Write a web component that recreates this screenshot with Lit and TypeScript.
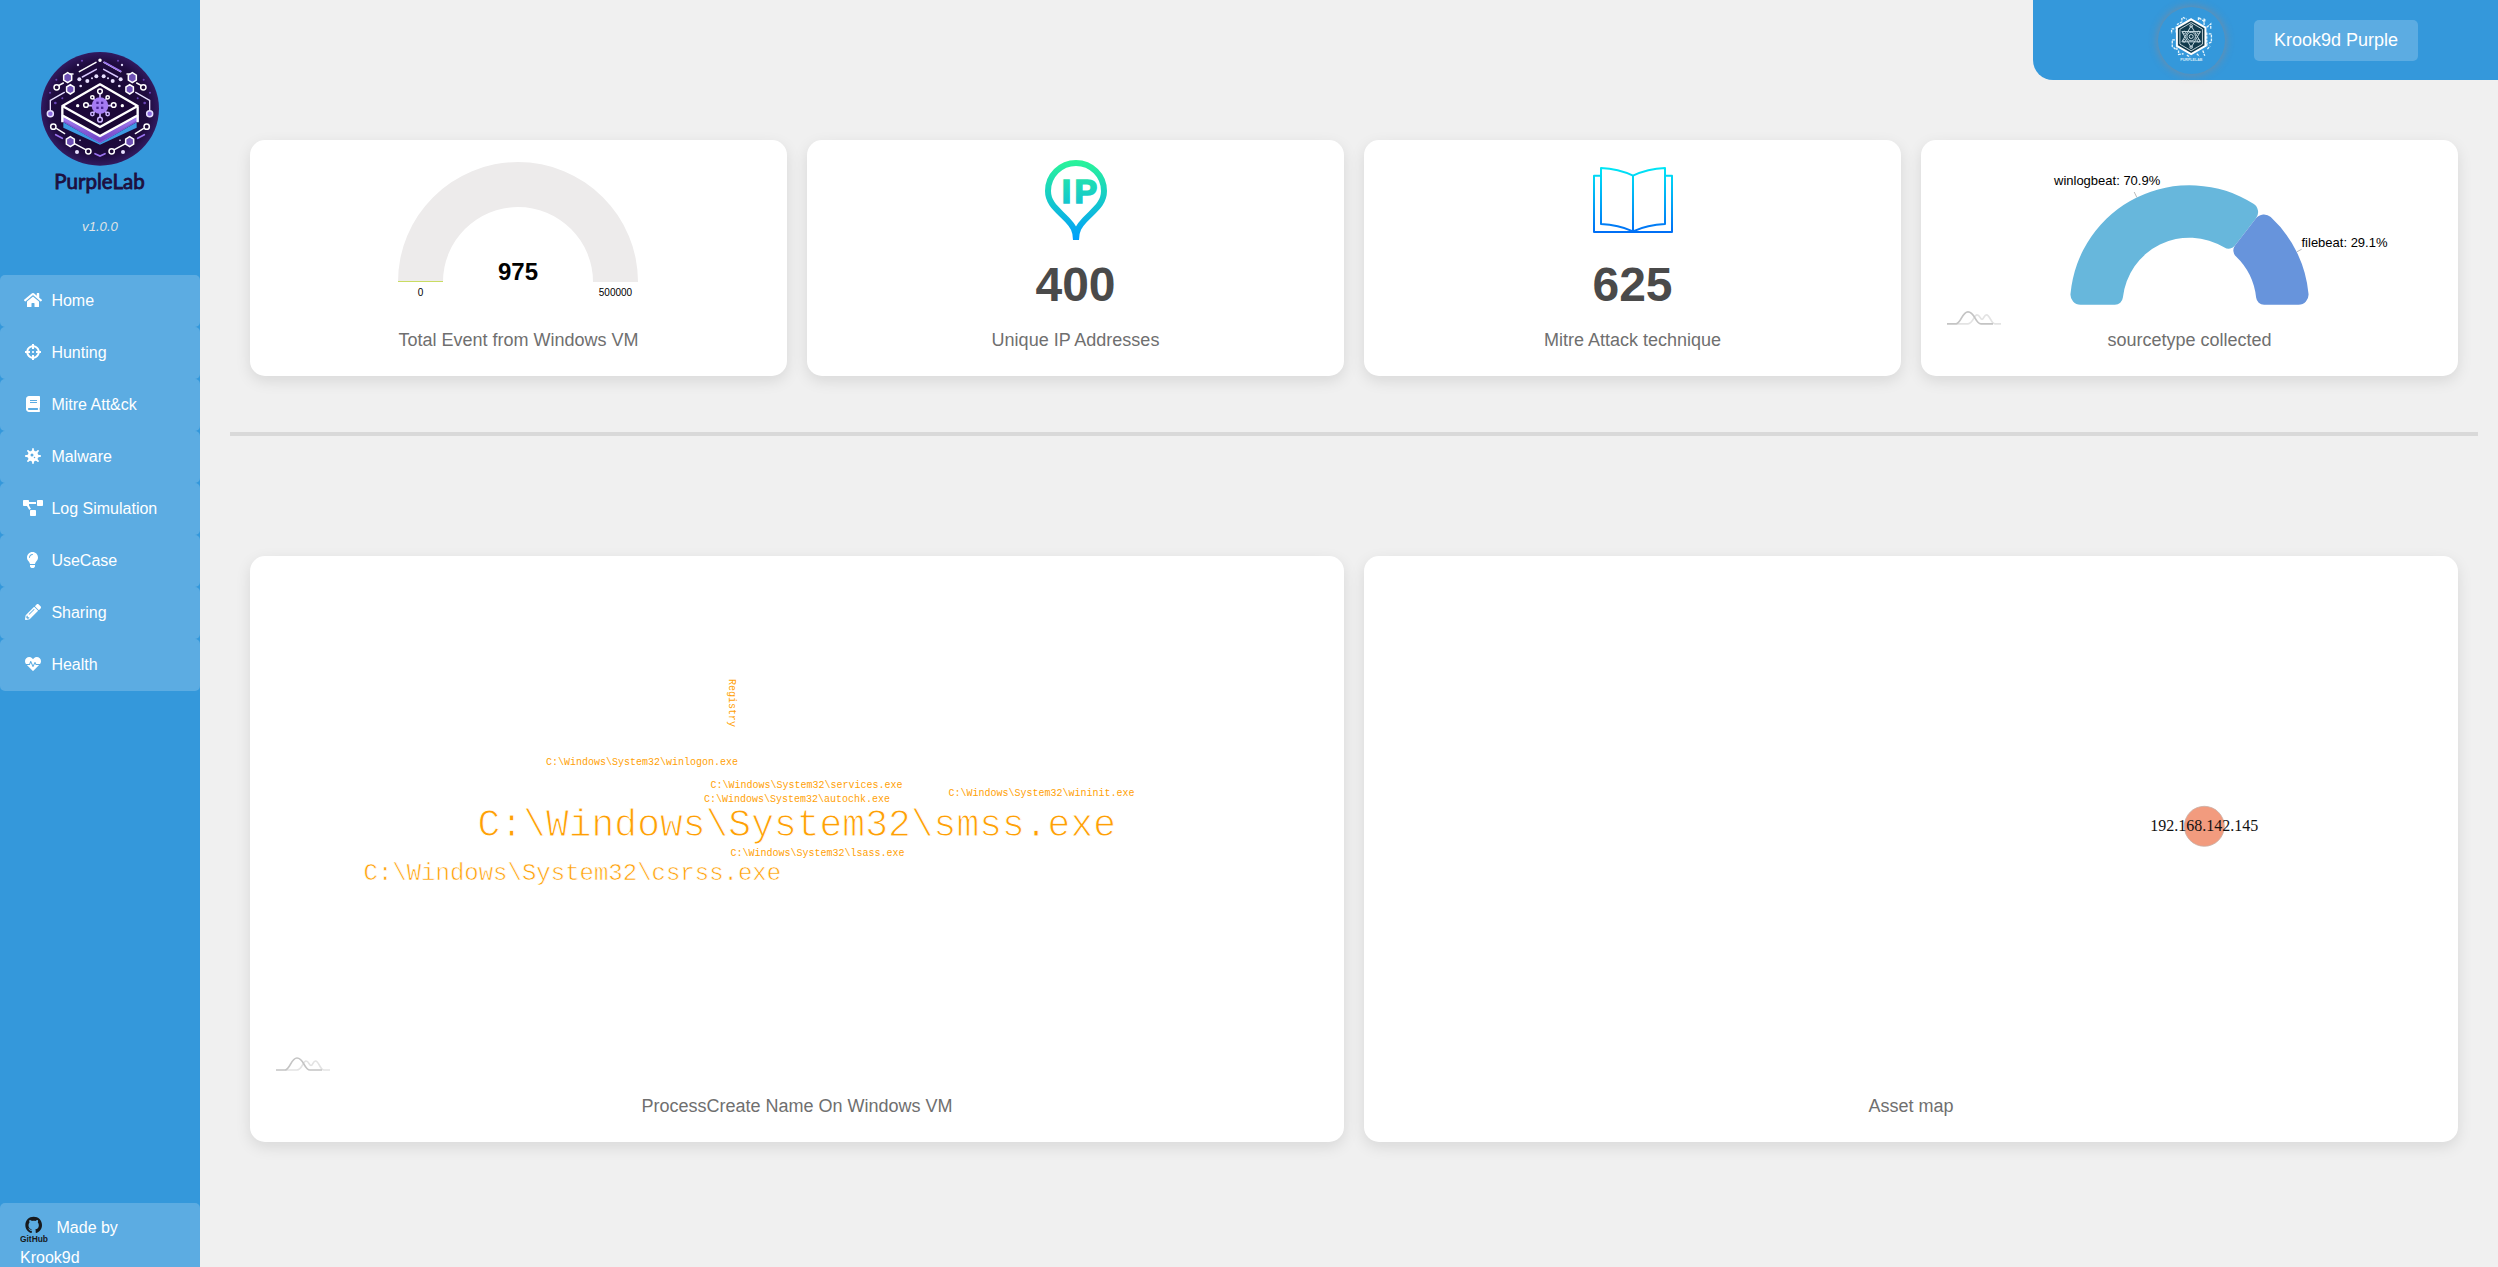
import { LitElement, html, css, svg } from "lit";
import { customElement, property } from "lit/decorators.js";

interface NavItem {
  label: string;
  width: number;
  path: string;
}

const NAV: NavItem[] = [
  {
    label: "Home",
    width: 576,
    path: "M280.37 148.26L96 300.11V464a16 16 0 0 0 16 16l112.06-.29a16 16 0 0 0 15.92-16V368a16 16 0 0 1 16-16h64a16 16 0 0 1 16 16v95.64a16 16 0 0 0 16 16.05L464 480a16 16 0 0 0 16-16V300L295.67 148.26a12.19 12.19 0 0 0-15.3 0zM571.6 251.47L488 182.56V44.05a12 12 0 0 0-12-12h-56a12 12 0 0 0-12 12v72.61L318.47 43a48 48 0 0 0-61 0L4.34 251.47a12 12 0 0 0-1.6 16.9l25.5 31A12 12 0 0 0 45.15 301l235.22-193.74a12.19 12.19 0 0 1 15.3 0L530.9 301a12 12 0 0 0 16.9-1.6l25.5-31a12 12 0 0 0-1.7-16.93z",
  },
  {
    label: "Hunting",
    width: 512,
    path: "M500 224h-30.364C455.724 130.325 381.675 56.276 288 42.364V12c0-6.627-5.373-12-12-12h-40c-6.627 0-12 5.373-12 12v30.364C130.325 56.276 56.276 130.325 42.364 224H12c-6.627 0-12 5.373-12 12v40c0 6.627 5.373 12 12 12h30.364C56.276 381.675 130.325 455.724 224 469.636V500c0 6.627 5.373 12 12 12h40c6.627 0 12-5.373 12-12v-30.364C381.675 455.724 455.724 381.675 469.636 288H500c6.627 0 12-5.373 12-12v-40c0-6.627-5.373-12-12-12zM288 404.634V364c0-6.627-5.373-12-12-12h-40c-6.627 0-12 5.373-12 12v40.634C165.826 392.232 119.783 346.243 107.366 288H148c6.627 0 12-5.373 12-12v-40c0-6.627-5.373-12-12-12h-40.634C119.768 165.826 165.757 119.783 224 107.366V148c0 6.627 5.373 12 12 12h40c6.627 0 12-5.373 12-12v-40.634C346.174 119.768 392.217 165.757 404.634 224H364c-6.627 0-12 5.373-12 12v40c0 6.627 5.373 12 12 12h40.634C392.232 346.174 346.243 392.217 288 404.634zM288 256c0 17.673-14.327 32-32 32s-32-14.327-32-32c0-17.673 14.327-32 32-32s32 14.327 32 32z",
  },
  {
    label: "Mitre Att&ck",
    width: 448,
    path: "M448 360V24c0-13.3-10.7-24-24-24H96C43 0 0 43 0 96v320c0 53 43 96 96 96h328c13.3 0 24-10.7 24-24v-16c0-7.5-3.5-14.3-8.9-18.7-4.2-15.4-4.2-59.3 0-74.7 5.4-4.3 8.9-11.1 8.9-18.6zM128 134c0-3.3 2.7-6 6-6h212c3.3 0 6 2.7 6 6v20c0 3.3-2.7 6-6 6H134c-3.3 0-6-2.7-6-6v-20zm0 64c0-3.3 2.7-6 6-6h212c3.3 0 6 2.7 6 6v20c0 3.3-2.7 6-6 6H134c-3.3 0-6-2.7-6-6v-20zm253.4 250H96c-17.7 0-32-14.3-32-32 0-17.6 14.4-32 32-32h285.4c-1.9 17.1-1.9 46.9 0 64z",
  },
  {
    label: "Malware",
    width: 512,
    path: "M483.55,227.55H462c-50.68,0-76.07-61.27-40.23-97.11L437,115.19A28.44,28.44,0,0,0,396.8,75L381.56,90.22c-35.84,35.83-97.11,10.45-97.11-40.23V28.44a28.45,28.45,0,0,0-56.9,0V50c0,50.68-61.27,76.06-97.11,40.23L115.2,75A28.44,28.44,0,0,0,75,115.19l15.25,15.25c35.84,35.84,10.45,97.11-40.23,97.11H28.45a28.45,28.45,0,1,0,0,56.89H50c50.68,0,76.07,61.28,40.23,97.12L75,396.8A28.45,28.45,0,0,0,115.2,437l15.24-15.25c35.84-35.84,97.11-10.45,97.11,40.23v21.54a28.45,28.45,0,0,0,56.9,0V462c0-50.68,61.27-76.07,97.11-40.23L396.8,437A28.45,28.45,0,0,0,437,396.8l-15.25-15.24c-35.84-35.84-10.45-97.12,40.23-97.12h21.54a28.45,28.45,0,1,0,0-56.89ZM224,272a48,48,0,1,1,48-48A48,48,0,0,1,224,272Zm80,56a24,24,0,1,1,24-24A24,24,0,0,1,304,328Z",
  },
  {
    label: "Log Simulation",
    width: 640,
    path: "M384 320H256c-17.67 0-32 14.33-32 32v128c0 17.67 14.33 32 32 32h128c17.67 0 32-14.33 32-32V352c0-17.67-14.33-32-32-32zM192 32c0-17.67-14.33-32-32-32H32C14.33 0 0 14.33 0 32v128c0 17.67 14.33 32 32 32h95.72l73.16 128.04C211.98 300.98 232.4 288 256 288h.28L192 175.51V128h224V64H192V32zM608 0H480c-17.67 0-32 14.33-32 32v128c0 17.67 14.33 32 32 32h128c17.67 0 32-14.33 32-32V32c0-17.67-14.33-32-32-32z",
  },
  {
    label: "UseCase",
    width: 352,
    path: "M96.06 454.35c.01 6.29 1.87 12.45 5.36 17.69l17.09 25.69a31.99 31.99 0 0 0 26.64 14.28h61.71a31.99 31.99 0 0 0 26.64-14.28l17.09-25.69a31.989 31.989 0 0 0 5.36-17.69l.04-38.35H96.01l.05 38.35zM0 176c0 44.37 16.45 84.85 43.56 115.78 16.52 18.85 42.36 58.23 52.21 91.45.04.26.07.52.11.78h160.24c.04-.26.07-.51.11-.78 9.85-33.22 35.69-72.6 52.21-91.45C335.55 260.85 352 220.37 352 176 352 78.61 272.91-.3 175.45 0 73.44.31 0 82.97 0 176zm176-80c-44.11 0-80 35.89-80 80 0 8.84-7.16 16-16 16s-16-7.16-16-16c0-61.76 50.24-112 112-112 8.84 0 16 7.16 16 16s-7.16 16-16 16z",
  },
  {
    label: "Sharing",
    width: 512,
    path: "M497.9 142.1l-46.1 46.1c-4.7 4.7-12.3 4.7-17 0l-111-111c-4.7-4.7-4.7-12.3 0-17l46.1-46.1c18.7-18.7 49.1-18.7 67.9 0l60.1 60.1c18.8 18.7 18.8 49.1 0 67.9zM284.2 99.8L21.6 362.4.4 483.9c-2.9 16.4 11.4 30.6 27.8 27.8l121.5-21.3 262.6-262.6c4.7-4.7 4.7-12.3 0-17l-111-111c-4.8-4.7-12.4-4.7-17.1 0zM124.1 339.9c-5.5-5.5-5.5-14.3 0-19.8l154-154c5.5-5.5 14.3-5.5 19.8 0s5.5 14.3 0 19.8l-154 154c-5.5 5.5-14.3 5.5-19.8 0zM88 424h48v36.3l-64.5 11.3-31.1-31.1L51.7 376H88v48z",
  },
  {
    label: "Health",
    width: 512,
    path: "M320.2 243.8l-49.7 99.4c-6 12.1-23.4 11.7-28.9-.6l-56.9-126.3-30 71.7H60.6l182.5 186.5c7.1 7.3 18.6 7.3 25.7 0L451.4 288H342.3l-22.1-44.2zM473.7 73.9l-2.4-2.5c-51.5-52.6-135.8-52.6-187.4 0L256 100l-27.9-28.5c-51.5-52.7-135.9-52.7-187.4 0l-2.4 2.4C-10.4 123.7-12.5 203 31 256h102.4l35.9-86.2c5.4-12.9 23.6-13.1 29.3-.4l58.2 129.3 49-97.9c5.9-11.8 22.7-11.8 28.6 0l27.6 55.2H481c43.5-53 41.4-132.3-7.3-182.1z",
  },
];

/** Ring segment with rounded corners; angles in degrees, counter-clockwise from the right. */
function slicePath(cx: number, cy: number, R: number, r: number, from: number, to: number, co: number, ci: number): string {
  const rad = Math.PI / 180;
  const a = from * rad;
  const b = to * rad;
  const p = (d: number, t: number) => `${(cx + d * Math.cos(t)).toFixed(2)} ${(cy - d * Math.sin(t)).toFixed(2)}`;
  const oo = Math.asin(co / (R - co));
  const io = Math.asin(ci / (r + ci));
  const eo = Math.sqrt((R - co) ** 2 - co ** 2);
  const ei = Math.sqrt((r + ci) ** 2 - ci ** 2);
  return [
    `M${p(ei, a)}`,
    `L${p(eo, a)}`,
    `A${co} ${co} 0 0 1 ${p(R, a - oo)}`,
    `A${R} ${R} 0 0 1 ${p(R, b + oo)}`,
    `A${co} ${co} 0 0 1 ${p(eo, b)}`,
    `L${p(ei, b)}`,
    `A${ci} ${ci} 0 0 1 ${p(r, b + io)}`,
    `A${r} ${r} 0 0 0 ${p(r, a - io)}`,
    `A${ci} ${ci} 0 0 1 ${p(ei, a)}`,
    "Z",
  ].join("");
}

/** Small chart-library mark, drawn with its left end of the baseline at (x, y). */
const chartMark = (x: number, y: number) => svg`
  <g transform="translate(${x} ${y})" fill="none" stroke-width="1.7">
    <path stroke="#e3e3e3" d="M9 0H21C26 0 27 -9 30 -9C33 -9 33 -4.5 35 -4.5C37 -4.5 37 -9 39.500 -9C43 -9 44 0 48 0H54"/>
    <path stroke="#c4c4c4" d="M0 0H9C14 0 15 -12 21 -12C28 -12 28 0 34 0H46"/>
  </g>`;

const poly = (cx: number, cy: number, s: number) =>
  `M${cx} ${cy - s}L${cx + s * 0.8} ${cy - s * 0.5}V${cy + s * 0.5}L${cx} ${cy + s}L${cx - s * 0.8} ${cy + s * 0.5}V${cy - s * 0.5}Z`;

@customElement("lab-logo")
class LabLogo extends LitElement {
  static styles = css`
    :host { display: block; width: 120px; height: 147px; }
    svg { display: block; width: 120px; height: 147px; }
    .name { font: 400 62px Lato, "Open Sans", sans-serif; fill: #1d0f40; stroke: #1d0f40; stroke-width: 2.5px; }
  `;

  render() {
    const half = () => svg`
      <path d="M238 215L288 187" stroke="#fff"/>
      <path d="M247 231L289 208" stroke="#d9c8ff"/>
      <path d="M177 256L190 249M219 222H211" stroke="#fff"/>
      <path d="M151 331V301L193 277" stroke="#e6dfff" stroke-width="4"/>
      <path d="M170 386L194 401" stroke="#fff" stroke-width="4"/>
      <path d="M167 404L187 415" stroke="#9a72ee" stroke-width="5"/>
      <path d="M222 430L257 449" stroke="#fff"/>
      <path d="${poly(203, 233, 15)}" fill="#6f50b5" stroke="#fff"/>
      <path d="${poly(211, 268, 14)}" fill="#6f50b5" stroke="#fff"/>
      <path d="${poly(211, 425, 15)}" fill="#6f50b5" stroke="#fff"/>
      <circle cx="170" cy="262" r="8" fill="#1d0a38" stroke="#fff"/>
      <circle cx="151" cy="341" r="9" fill="#8d6be0" stroke="#e6dfff"/>
      <circle cx="160" cy="380" r="8" fill="#1d0a38" stroke="#fff"/>
      <circle cx="265" cy="454" r="8" fill="#1d0a38" stroke="#fff"/>
      <g fill="#e8e0ff" stroke="none">
        <circle cx="238" cy="238" r="6"/><circle cx="262" cy="243" r="6"/><circle cx="289" cy="229" r="6"/>
        <circle cx="276" cy="235" r="3"/><circle cx="242" cy="258" r="4"/><circle cx="231" cy="456" r="6"/>
        <circle cx="234" cy="195" r="3.500"/>
        <circle cx="240" cy="421" r="2.500"/>
      </g>
      <g fill="#6a45b8" stroke="none">
        <circle cx="169" cy="239" r="3"/><circle cx="150" cy="278" r="3"/><circle cx="246" cy="182" r="3"/>
        <circle cx="166" cy="309" r="4"/><circle cx="187" cy="295" r="3"/>
      </g>`;
    return html`<svg viewBox="120 150 360 441">
      <defs>
        <radialGradient id="disc" cx="50%" cy="50%" r="55%">
          <stop offset="0" stop-color="#12062a"/><stop offset=".75" stop-color="#1f0b3f"/><stop offset="1" stop-color="#3b2272"/>
        </radialGradient>
        <linearGradient id="side" x1="0" y1="0" x2="0" y2="1">
          <stop offset="0" stop-color="#a883f5"/><stop offset="1" stop-color="#6a3ec0"/>
        </linearGradient>
      </defs>
      <ellipse cx="300" cy="326.500" rx="177" ry="170.500" fill="url(#disc)"/>
      <g fill="none" stroke-width="4.500" stroke-linecap="round">
        ${half()}
        <g transform="translate(600 0) scale(-1 1)">${half()}</g>
        <path d="M313 187L362 214M285 461L300 468L315 461" stroke="#9a72ee" stroke-width="5"/>
        <circle cx="300" cy="181" r="3" fill="#fff" stroke="#fff"/>
      </g>
      <path d="M186 362L300 428L414 362V348L300 412L186 348Z" fill="url(#side)" stroke="#8058d6" stroke-width="4"/>
      <path d="M190 367L300 430L410 367V383L300 434L190 383Z" fill="#3d9ae4"/>
      <path d="M300 252L414 318V346L300 408L186 346V318Z" fill="#1a0735"/>
      <g fill="none" stroke="#fff" stroke-width="7" stroke-linejoin="round">
        <path d="M300 253L413 318L300 381L187 318Z" fill="#1c0838"/>
        <path d="M187 320V367M413 320V367M189 347L300 408L411 347"/>
      </g>
      <circle cx="233" cy="317" r="5" fill="#fff"/><circle cx="367" cy="317" r="5" fill="#fff"/>
      <g fill="none" stroke="#cdb6ff" stroke-width="5">
        <path d="M300 282V352M266 317H334M281 296L319 338M319 296L281 338"/>
        <g fill="#1c0838" stroke-width="4.500">
          <circle cx="300" cy="274" r="7" stroke="#fff"/><circle cx="300" cy="359" r="7"/>
          <circle cx="258" cy="315" r="7" stroke="#fff"/><circle cx="341" cy="315" r="7" stroke="#fff"/>
          <circle cx="277" cy="292" r="5" stroke="#fff"/><circle cx="323" cy="292" r="5" stroke="#fff"/>
          <circle cx="277" cy="342" r="5"/><circle cx="323" cy="342" r="5"/>
        </g>
      </g>
      <circle cx="300" cy="317" r="25" fill="#a57cf3"/>
      <g fill="#4a2596">
        <rect x="289" y="305" width="7" height="7"/><rect x="303" y="305" width="7" height="7"/>
        <rect x="289" y="320" width="7" height="7"/><rect x="303" y="320" width="7" height="7"/>
      </g>
      <text class="name" x="163" y="567" textLength="271" lengthAdjust="spacingAndGlyphs">PurpleLab</text>
    </svg>`;
  }
}

@customElement("lab-sidebar")
class LabSidebar extends LitElement {
  static styles = css`
    :host {
      display: flex; flex-direction: column; width: 200px; height: 1267px; box-sizing: border-box;
      padding-top: 50px; overflow: hidden; background: #3498db; color: #fff;
      font-family: "Liberation Sans", Arial, sans-serif; font-size: 16px;
    }
    .logo { align-self: center; }
    .version { margin-top: 22px; height: 56px; line-height: 16px; text-align: center; font-size: 13.2px; font-style: italic; color: #dfe3e6; }
    .item { display: flex; align-items: center; height: 52px; box-sizing: border-box; padding-left: 20px; border-radius: 5px; background: rgba(255, 255, 255, 0.2); }
    .icon { display: flex; justify-content: center; width: 25px; margin: 0 6.4px 2px 0; }
    .icon svg { height: 16px; fill: #fff; display: block; }
    .text { padding-bottom: 1px; }
    .credit { margin-top: auto; flex: none; height: 64px; box-sizing: border-box; padding: 14px 20px 0; border-radius: 5px 5px 0 0; background: rgba(255, 255, 255, 0.2); }
    .row { display: flex; align-items: flex-start; height: 32px; line-height: 22px; }
    .row svg { width: 28px; height: 27px; margin: -1px 8.5px 0 0; }
    .hub { font: 700 27px "Liberation Sans", Arial, sans-serif; fill: #17191c; }
    .second { display: block; line-height: 18px; }
  `;

  render() {
    return html`
      <lab-logo class="logo"></lab-logo>
      <div class="version">v1.0.0</div>
      <nav>
        ${NAV.map(
          (n) => html`<div class="item">
            <span class="icon"><svg width=${n.width / 32} height="16" viewBox="0 0 ${n.width} 512"><path d=${n.path} /></svg></span>
            <span class="text">${n.label}</span>
          </div>`
        )}
      </nav>
      <div class="credit">
        <div class="row">
          <svg viewBox="60 108 84 81">
            <path fill="#17191c" fill-rule="evenodd" d="M101 110.500C87 110.500 76 121 76 135C76 147 83 155.500 93 159C95 159.500 95.500 158 95.500 156.500V152.500C90 153.500 88 150.500 86.500 148C85.500 146.500 84 146 84 145.500C88 144.500 90 149 92.500 149.500C94 149.800 95.500 149 96 148C90 147 85.500 143.500 85.500 135.500C85.500 132 86.500 129.500 88.500 127.500C87.500 125 87.500 122 88.500 120C91.500 120 94 121.500 96 123C99 122.300 103 122.300 106 123C108 121.500 110.500 120 113.500 120C114.500 122 114.500 125 113.500 127.500C115.500 129.500 116.500 132 116.500 135.500C116.500 143.500 112 147 106 148C107 149.500 107 151 107 153V156.500C107 158 107.500 159.500 109 159C119 155.500 126 147 126 135C126 121 115 110.500 101 110.500Z"/>
            <text class="hub" x="60" y="186" textLength="84" lengthAdjust="spacingAndGlyphs">GitHub</text>
          </svg>
          <span>Made by</span>
        </div>
        <span class="second">Krook9d</span>
      </div>
    `;
  }
}

@customElement("lab-header")
class LabHeader extends LitElement {
  static styles = css`
    :host {
      display: flex; align-items: center; justify-content: flex-end; gap: 29px; width: 465px; height: 80px;
      box-sizing: border-box; padding-right: 80px; border-radius: 0 0 0 20px; background: #3498db;
      font-family: "Liberation Sans", Arial, sans-serif;
    }
    .avatar { width: 67px; height: 67px; border-radius: 50%; box-shadow: 0 0 10px rgba(225, 120, 70, 0.42); }
    .avatar svg { display: block; width: 67px; height: 67px; }
    .user { height: 41px; line-height: 40px; margin-top: 1px; padding: 0 20px; border-radius: 5px; background: rgba(255, 255, 255, 0.2); color: #fff; font-size: 18px; white-space: nowrap; }
    .tiny { font: 700 11px "Liberation Sans", Arial, sans-serif; fill: #d5ebf8; }
  `;

  render() {
    return html`
      <div class="avatar">
        <svg viewBox="443 19 202 202" fill="none">
          <g stroke="#e3f3fb" stroke-width="4" stroke-dasharray="8 3">
            <path d="M515 52V64L500 72M518 50L530 56M565 58V50L584 64V55M590 80L602 70V85M596 100H604V125L592 130"/>
            <path d="M492 85H484V100M494 118H486V138L496 146M505 150V162L520 160M530 164L540 170M560 160L568 168M578 150L584 166M592 146L600 136"/>
            <path d="M582 54V78M498 78V96M590 96V140M500 130V150"/>
          </g>
          <path d="M543 56L586 81V136L543 161L500 136V81Z" fill="#123a4c" stroke="#fff" stroke-width="6"/>
          <path d="M543 66L577 86V131L543 151L509 131V86Z" stroke="#e3eef2" stroke-width="2.500"/>
          <g stroke="#c3d6de" stroke-width="3">
            <path d="M543 76L571 124H515ZM543 141L571 93H515Z"/>
            <circle cx="543" cy="108" r="13"/><circle cx="543" cy="108" r="6"/>
            <circle cx="543" cy="76" r="4"/><circle cx="543" cy="140" r="4"/>
            <circle cx="522" cy="96" r="4"/><circle cx="565" cy="96" r="4"/><circle cx="522" cy="121" r="4"/><circle cx="565" cy="121" r="4"/>
          </g>
          <text class="tiny" x="510" y="183" textLength="67" lengthAdjust="spacingAndGlyphs">PURPLELAB</text>
        </svg>
      </div>
      <div class="user">Krook9d Purple</div>
    `;
  }
}

@customElement("lab-card")
class LabCard extends LitElement {
  @property() label = "";

  static styles = css`
    :host {
      display: flex; flex-direction: column; align-items: center; box-sizing: border-box; padding-bottom: 26px;
      border-radius: 15px; background: #fff; box-shadow: 0 5px 15px rgba(0, 0, 0, 0.1);
      font-family: "Liberation Sans", Arial, sans-serif;
    }
    .body { flex: 1; display: flex; flex-direction: column; align-items: center; width: 100%; }
    .label { height: 20px; line-height: 20px; font-size: 18px; color: #6f6f6f; }
  `;

  render() {
    return html`<div class="body"><slot></slot></div><div class="label">${this.label}</div>`;
  }
}

interface Word { text: string; x: number; y: number; size: number; thin?: number; turn?: boolean }

/** thin: width of the white outline that slims the large glyphs. */
const WORDS: Word[] = [
  { text: "C:\\Windows\\System32\\smss.exe", x: 477.5, y: 836, size: 38, thin: 1 },
  { text: "C:\\Windows\\System32\\csrss.exe", x: 363.5, y: 880, size: 24, thin: 0.6 },
  { text: "C:\\Windows\\System32\\winlogon.exe", x: 546, y: 765, size: 10 },
  { text: "C:\\Windows\\System32\\services.exe", x: 710.5, y: 788, size: 10 },
  { text: "C:\\Windows\\System32\\autochk.exe", x: 704, y: 802, size: 10 },
  { text: "C:\\Windows\\System32\\wininit.exe", x: 948.5, y: 796, size: 10 },
  { text: "C:\\Windows\\System32\\lsass.exe", x: 730.5, y: 856, size: 10 },
  { text: "Registry", x: 729, y: 679, size: 10, turn: true },
];

@customElement("app-root")
class AppRoot extends LitElement {
  static styles = css`
    :host { display: flex; width: 2498px; height: 1267px; overflow: hidden; background: #f0f0f0; font-family: "Liberation Sans", Arial, sans-serif; }
    .main { flex: 1; display: flex; flex-direction: column; }
    .top { align-self: flex-end; }
    .stats { display: grid; grid-template-columns: repeat(4, 1fr); gap: 20px; height: 236px; margin: 60px 40px 0 50px; }
    .rule { height: 4px; margin: 56px 20px 0 30px; background: #d9d9d9; }
    .charts { display: grid; grid-template-columns: repeat(2, 1fr); gap: 20px; height: 586px; margin: 120px 40px 0 50px; }
    .plot { display: block; width: 100%; height: 189px; }
    .plot.tall { height: 539px; }
    .glyph { display: block; width: 80px; height: 80px; margin-top: 20px; }
    .num { margin-top: 17px; height: 56px; line-height: 56px; font-size: 48px; font-weight: 700; color: #4a4a4a; }
    .value { font-size: 24px; font-weight: 700; fill: #010101; }
    .tick { font-size: 10px; fill: #000; }
    .name { font-size: 13px; fill: #000; }
    .pin { font-size: 102px; font-weight: 700; fill: url(#ipg); stroke: url(#ipg); stroke-width: 5px; }
    .word { font-family: "Liberation Mono", "Courier New", monospace; fill: #ff9f05; stroke: #fff; }
    .host { font-family: "Liberation Serif", "Times New Roman", serif; font-size: 16px; fill: #111; }
  `;

  render() {
    return html`
      <lab-sidebar></lab-sidebar>
      <div class="main">
        <lab-header class="top"></lab-header>
        <div class="stats">
          <lab-card label="Total Event from Windows VM">
            <svg class="plot" viewBox="250 140 537 189">
              <path d="M398 282A120 120 0 0 1 638 282H593A75 75 0 0 0 443 282Z" fill="#edebeb"/>
              <path d="M398 281.500H443" stroke="#c9dc62" stroke-width="1"/>
              <text class="value" x="518" y="280" text-anchor="middle">975</text>
              <text class="tick" x="420.500" y="296" text-anchor="middle">0</text>
              <text class="tick" x="615.500" y="296" text-anchor="middle">500000</text>
            </svg>
          </lab-card>
          <lab-card label="Unique IP Addresses">
            <svg class="glyph" viewBox="168 90 240 240">
              <defs><linearGradient id="ipg" gradientUnits="userSpaceOnUse" x1="0" y1="90" x2="0" y2="330">
                <stop offset="0" stop-color="#2af598"/><stop offset="1" stop-color="#009efd"/>
              </linearGradient></defs>
              <path d="M288 330C288 300 278 287 262 270C235 241 204 222 204 183A84 84 0 0 1 372 183C372 222 341 241 314 270C298 287 288 300 288 330" fill="none" stroke="url(#ipg)" stroke-width="18"/>
              <text class="pin" y="219.500"><tspan x="245">I</tspan><tspan x="283.500">P</tspan></text>
            </svg>
            <div class="num">400</div>
          </lab-card>
          <lab-card label="Mitre Attack technique">
            <svg class="glyph" viewBox="189 90 240 240">
              <defs><linearGradient id="bkg" gradientUnits="userSpaceOnUse" x1="0" y1="110" x2="0" y2="310">
                <stop offset="0" stop-color="#00e8f5"/><stop offset="1" stop-color="#006df5"/>
              </linearGradient></defs>
              <g fill="none" stroke="url(#bkg)" stroke-width="6" stroke-linejoin="round">
                <path d="M213 137H192V306H426V137H405"/>
                <path d="M213 114Q265 116 309 137Q353 116 405 114V282Q353 284 309 304Q265 284 213 282Z"/>
                <path d="M309 137L309.010 304"/>
              </g>
            </svg>
            <div class="num">625</div>
          </lab-card>
          <lab-card label="sourcetype collected">
            <svg class="plot" viewBox="1921 140 537 189">
              <path d=${slicePath(2189.5, 304.7, 119.5, 67, 180, 52.4, 10, 8)} fill="#67b7dc"/>
              <path d=${slicePath(2189.5, 304.7, 119.5, 67, 52.4, 0, 10, 8)} fill="#6794dc"/>
              <path d="M2134.200 192L2136.800 197.300M2297 251.700L2301.600 249.300" stroke="#bbb" fill="none"/>
              <text class="name" x="2054" y="185">winlogbeat: 70.9%</text>
              <text class="name" x="2301.500" y="247">filebeat: 29.1%</text>
              ${chartMark(1947, 323.8)}
            </svg>
          </lab-card>
        </div>
        <div class="rule"></div>
        <div class="charts">
          <lab-card label="ProcessCreate Name On Windows VM">
            <svg class="plot tall" viewBox="250 556 1094 539">
              ${WORDS.map((w) => svg`<text class="word" font-size=${w.size} stroke-width=${w.thin ?? 0} transform="translate(${w.x} ${w.y})${w.turn ? " rotate(90)" : ""}">${w.text}</text>`)}
              ${chartMark(276, 1070)}
            </svg>
          </lab-card>
          <lab-card label="Asset map">
            <svg class="plot tall" viewBox="1364 556 1094 539">
              <circle cx="2204.300" cy="826.300" r="20" fill="#f29b7e" stroke="#c9b0a6" stroke-width=".8"/>
              <text class="host" x="2204.300" y="831" text-anchor="middle">192.168.142.145</text>
            </svg>
          </lab-card>
        </div>
      </div>
    `;
  }
}
